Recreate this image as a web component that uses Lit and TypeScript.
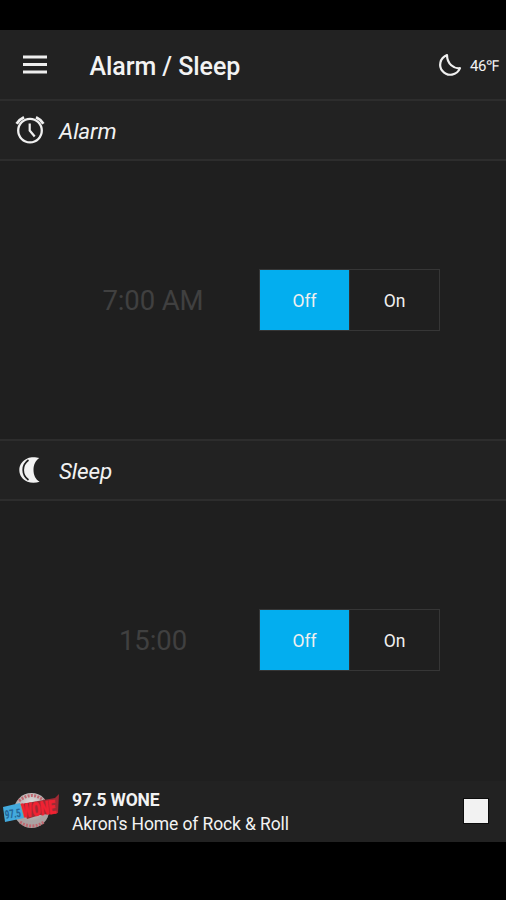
import { LitElement, html, css, svg } from "lit";
import { customElement, property } from "lit/decorators.js";
import { classMap } from "lit/directives/class-map.js";

const alarmIcon = svg`
  <g fill="none" stroke="#f0f0f0">
    <circle cx="15" cy="15.600" r="11.800" stroke-width="2.300"/>
    <path d="M14.700 8.500V15.500l5 6" stroke-width="2.200"/>
    <path d="M1.600 8.700Q4.200 4.600 9 2.300M28.400 8.700Q25.800 4.600 21 2.300" stroke-width="2.800"/>
  </g>`;

const moonIcon = svg`
  <path d="M24.300 3.100C21 1.900 16 1.700 12.700 3.200C7.700 5.500 4.300 9.500 4.300 15C4.300 20.500 7.500 24.500 12.500 26.700C16 28.100 21 28 24.600 26.700C20.500 24.500 18.500 20 18.500 15C18.500 10 20.500 5.500 24.300 3.100Z" fill="#f3f3f3"/>
  <path d="M13.500 5Q8.200 8.800 8.200 15T13.500 25" fill="none" stroke="#222" stroke-width="1.700"/>`;

@customElement("toggle-pair")
class TogglePair extends LitElement {
  @property({ type: Boolean }) on = false;
  static styles = css`
    :host { display: flex; box-sizing: border-box; width: 181px; height: 62px; border: 1px solid #363636; }
    .option { flex: 1; display: flex; align-items: center; justify-content: center; color: #f0f0f0;
      font-size: 17.5px; padding-top: 1px; }
    .active { background: #03aeef; }
    .option + .option { border-left: 1px solid #303030; }
  `;
  render() {
    return html`
      <div class=${classMap({ option: true, active: !this.on })} @click=${() => (this.on = false)}>Off</div>
      <div class=${classMap({ option: true, active: this.on })} @click=${() => (this.on = true)}>On</div>`;
  }
}

@customElement("timer-section")
class TimerSection extends LitElement {
  @property() label = "";
  @property() time = "";
  @property() icon = "";
  static styles = css`
    :host { display: flex; flex-direction: column; }
    .heading { height: 58px; flex: none; display: flex; align-items: center; background: #222;
      border-bottom: 2px solid #2d2d2d; padding-left: 15px; gap: 14px;
      font-size: 22.5px; font-style: italic; color: #f2f2f2; }
    .label { padding-top: 2px; letter-spacing: -.1px; }
    svg { width: 30px; height: 30px; flex: none; }
    .body { flex: 1; display: flex; align-items: center; }
    .time { width: 212px; margin-left: 47px; padding-top: 1px; text-align: center; font-size: 27.5px;
      letter-spacing: -.1px; color: #404040; }
  `;
  render() {
    return html`
      <div class="heading">
        <svg viewBox="0 0 30 30">${this.icon === "alarm" ? alarmIcon : moonIcon}</svg>
        <span class="label">${this.label}</span>
      </div>
      <div class="body"><div class="time">${this.time}</div><toggle-pair></toggle-pair></div>`;
  }
}

@customElement("app-root")
class AppRoot extends LitElement {
  static styles = css`
    :host { display: flex; flex-direction: column; box-sizing: border-box; height: 900px; overflow: hidden;
      padding: 30px 0 58px; background: #000; font-family: Roboto, "Liberation Sans", sans-serif; color: #f3f3f3; }
    header { height: 69px; flex: none; display: flex; align-items: center; background: #222;
      border-bottom: 2px solid #2d2d2d; }
    .menu { width: 24px; height: 19px; margin-left: 23px; }
    h1 { margin: 0 0 0 42.4px; padding-top: 3px; font-size: 25px; letter-spacing: -.05px; font-weight: 500; flex: 1; white-space: nowrap; }
    .moon { width: 24px; height: 24px; }
    .degrees { width: 36px; padding-left: 8px; font-size: 15px; letter-spacing: -.5px; white-space: nowrap; }
    timer-section { background: #1f1f1f; }
    .alarm { height: 338px; border-bottom: 2px solid #2d2d2d; }
    .sleep { height: 338px; padding-bottom: 2px; }
    footer { flex: 1; display: flex; align-items: center; background: #222; padding-bottom: 1px; }
    .logo { width: 60px; height: 44px; margin-left: 2px; overflow: visible; }
    .info { margin-left: 10px; padding-top: 2px; flex: 1; line-height: 24px; font-size: 17.5px; letter-spacing: -.12px; white-space: nowrap; }
    .station { font-weight: 700; font-size: 17.5px; letter-spacing: -.2px; }
    .stop { width: 24px; height: 24px; background: #f2f2f2; margin-right: 18px; outline: 1px solid #0c0c0c; }
  `;
  render() {
    return html`
      <header>
        <svg class="menu" viewBox="0 0 24 19"><path d="M0 2h24M0 9.500h24M0 17h24" stroke="#eee" stroke-width="3"/></svg>
        <h1>Alarm / Sleep</h1>
        <svg class="moon" viewBox="0 0 24 24"><path d="M9 2C1.500 5 .500 13.500 4.500 18C9.500 24 19 22.500 22 15.200C16 16 9 11 9 2Z" fill="none" stroke="#f0f0f0" stroke-width="2.200" stroke-linejoin="round"/></svg>
        <span class="degrees">46℉</span>
      </header>
      <timer-section class="alarm" label="Alarm" time="7:00 AM" icon="alarm"></timer-section>
      <timer-section class="sleep" label="Sleep" time="15:00" icon="moon"></timer-section>
      <footer>
        <svg class="logo" viewBox="0 0 60 44">
          <defs>
            <radialGradient id="ball" cx=".5" cy=".3"><stop offset="0" stop-color="#e0dddd"/><stop offset="1" stop-color="#aaa2a2"/></radialGradient>
          </defs>
          <circle cx="29.500" cy="21.500" r="17.500" fill="url(#ball)"/>
          <path d="M17 12Q30 1 42 12M18 33Q30 41 42 33" fill="none" stroke="#c06870" stroke-width="3" stroke-dasharray="2 1.300"/>
          <path d="M1 18L18 14L22 29L3 33Z" fill="#43aadd"/>
          <path d="M19 15L53 9L57 5L56 24L38 26L25 30Z" fill="#a02a34"/>
          <g font-family="Roboto" font-weight="900">
            <text transform="translate(3.500 30) rotate(-8)" font-size="12" textLength="16" lengthAdjust="spacingAndGlyphs" fill="#24679a">97.5</text>
            <text transform="translate(20.500 28.500) rotate(-7)" font-size="19" textLength="34" lengthAdjust="spacingAndGlyphs" fill="#f02232" stroke="#f02232" stroke-width=".6">WONE</text>
          </g>
        </svg>
        <div class="info"><div class="station">97.5 WONE</div><div>Akron's Home of Rock &amp; Roll</div></div>
        <div class="stop"></div>
      </footer>`;
  }
}
